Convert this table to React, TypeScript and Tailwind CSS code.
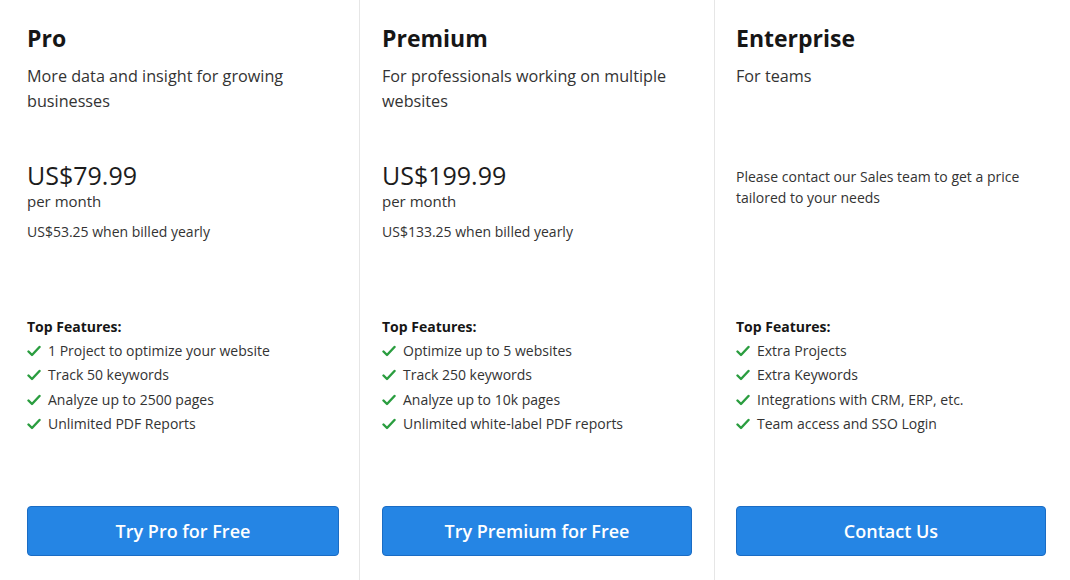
import React from "react";

type Plan = {
  title: string;
  subtitle: string;
  price?: string;
  yearly?: string;
  contact?: string;
  features: string[];
  button: string;
};

const plans: Plan[] = [
  {
    title: "Pro",
    subtitle: "More data and insight for growing businesses",
    price: "US$79.99",
    yearly: "US$53.25 when billed yearly",
    features: [
      "1 Project to optimize your website",
      "Track 50 keywords",
      "Analyze up to 2500 pages",
      "Unlimited PDF Reports",
    ],
    button: "Try Pro for Free",
  },
  {
    title: "Premium",
    subtitle: "For professionals working on multiple websites",
    price: "US$199.99",
    yearly: "US$133.25 when billed yearly",
    features: [
      "Optimize up to 5 websites",
      "Track 250 keywords",
      "Analyze up to 10k pages",
      "Unlimited white-label PDF reports",
    ],
    button: "Try Premium for Free",
  },
  {
    title: "Enterprise",
    subtitle: "For teams",
    contact: "Please contact our Sales team to get a price tailored to your needs",
    features: [
      "Extra Projects",
      "Extra Keywords",
      "Integrations with CRM, ERP, etc.",
      "Team access and SSO Login",
    ],
    button: "Contact Us",
  },
];

function Check() {
  return (
    <svg width="14" height="12" viewBox="0 0 14 12" className="shrink-0">
      <polyline
        points="1.5,6.5 5,10 12.5,2"
        fill="none"
        stroke="#2a9d3f"
        strokeWidth="2.4"
        strokeLinecap="round"
        strokeLinejoin="round"
      />
    </svg>
  );
}

function Column({ plan, className }: { plan: Plan; className: string }) {
  return (
    <div className={`flex flex-col h-full ${className}`}>
      <div className="pt-[22px] text-[23px] leading-[32px] font-bold text-[#161616]">{plan.title}</div>
      <div className="mt-[10px] h-[50px] text-[16.2px] leading-[25px] text-[#333]">{plan.subtitle}</div>
      <div className="mt-[46px] h-[155px]">
        {plan.price ? (
          <>
            <div className="text-[25px] leading-[30px] text-[#1c1c1c]">{plan.price}</div>
            <div className="text-[15px] leading-[22px] text-[#333]">per month</div>
            <div className="mt-[10px] text-[14px] leading-[20px] text-[#333]">{plan.yearly}</div>
          </>
        ) : (
          <div className="mt-[6px] text-[14px] leading-[21px] text-[#333] pr-[20px]">{plan.contact}</div>
        )}
      </div>
      <div className="text-[14px] leading-[24px] font-bold text-[#161616]">Top Features:</div>
      <ul className="flex flex-col">
        {plan.features.map((f) => (
          <li key={f} className="flex items-center gap-[7px] text-[14px] leading-[24.3px] text-[#333]">
            <Check />
            <span>{f}</span>
          </li>
        ))}
      </ul>
      <div className="mt-auto pb-[24px]">
        <button className="w-full h-[50px] rounded-[4px] bg-[#2585e4] border border-[#1a6cc4] text-white text-[18px] font-semibold">
          {plan.button}
        </button>
      </div>
    </div>
  );
}

export default function App() {
  return (
    <div
      className="flex h-[580px] w-[1070px] bg-white overflow-hidden"
      style={{ fontFamily: '"Open Sans", "Noto Sans", sans-serif' }}
    >
      <Column plan={plans[0]} className="w-[359px] pl-[27px] pr-[20px]" />
      <div className="w-px h-full bg-[#e6e6e6]" />
      <Column plan={plans[1]} className="w-[354px] px-[22px]" />
      <div className="w-px h-full bg-[#e6e6e6]" />
      <Column plan={plans[2]} className="flex-1 pl-[21px] pr-[24px]" />
    </div>
  );
}
